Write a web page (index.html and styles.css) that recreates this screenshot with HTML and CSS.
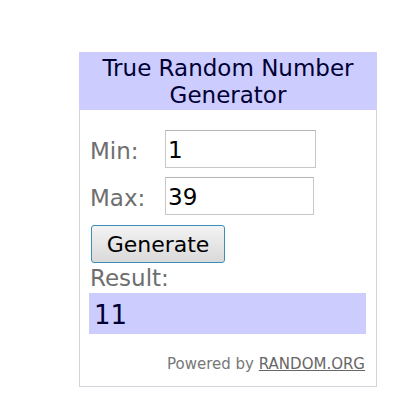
FILE: index.html
```html
<!DOCTYPE html>
<html>
<head>
<meta charset="utf-8">
<link rel="stylesheet" href="styles.css">
</head>
<body>
<div class="page">
  <div class="widget">
    <div class="title">True Random Number Generator</div>
    <div class="body">
      <div class="row"><span class="label">Min:</span><div class="input">1</div></div>
      <div class="row"><span class="label">Max:</span><div class="input input2">39</div></div>
      <div class="btn">Generate</div>
      <div class="result-label">Result:</div>
      <div class="result">11</div>
      <div class="powered">Powered by <span class="link">RANDOM.ORG</span></div>
    </div>
  </div>
</div>
</body>
</html>
```
FILE: styles.css
```css
html, body { margin: 0; padding: 0; background: #fff; }
.page { padding: 52px 0 0 79px; }
.widget {
  box-sizing: border-box;
  width: 298px;
  height: 335px;
  border: 1px solid #d4d4dc;
  border-top: none;
  font-family: "DejaVu Sans", Verdana, sans-serif;
  display: flex;
  flex-direction: column;
}
.title {
  background: #ccccff;
  color: #000033;
  text-align: center;
  font-size: 23px;
  line-height: 27px;
  height: 58px;
  box-sizing: border-box;
  padding-top: 3px;
  margin: 0 -1px 0 -1px;
}
.body {
  padding: 20px 10px 0 10px;
  display: flex;
  flex-direction: column;
}
.row { display: flex; align-items: center; height: 38px; margin-bottom: 9px; }
.label { width: 75px; color: #6e6e6e; font-size: 23px; line-height: 30px; padding-top: 4px; }
.input {
  box-sizing: border-box;
  width: 151px;
  height: 38px;
  border: 1px solid #c8c8c8;
  border-top-color: #b4b4b4;
  font-size: 23px;
  line-height: 38px;
  padding-left: 2px;
  color: #000;
}
.input2 { width: 149px; }
.btn {
  box-sizing: border-box;
  margin-top: 1px;
  margin-left: 1px;
  width: 134px;
  height: 38px;
  border: 1px solid #3c8fb5;
  border-radius: 3px;
  background: linear-gradient(#f3f3f3, #e6e6e6 50%, #d9d9d9);
  text-align: center;
  font-size: 22px;
  line-height: 37px;
  color: #000;
}
.result-label { color: #6e6e6e; font-size: 23px; line-height: 29px; margin-top: 1px; }
.result {
  box-sizing: border-box;
  margin-left: -1px;
  width: 277px;
  height: 41px;
  background: #ccccff;
  color: #000033;
  font-size: 26px;
  line-height: 44px;
  padding-left: 5px;
}
.powered {
  text-align: right;
  color: #777;
  font-size: 15px;
  margin-top: 21px;
  padding-right: 1px;
}
.link { color: #666; text-decoration: underline; }
```
